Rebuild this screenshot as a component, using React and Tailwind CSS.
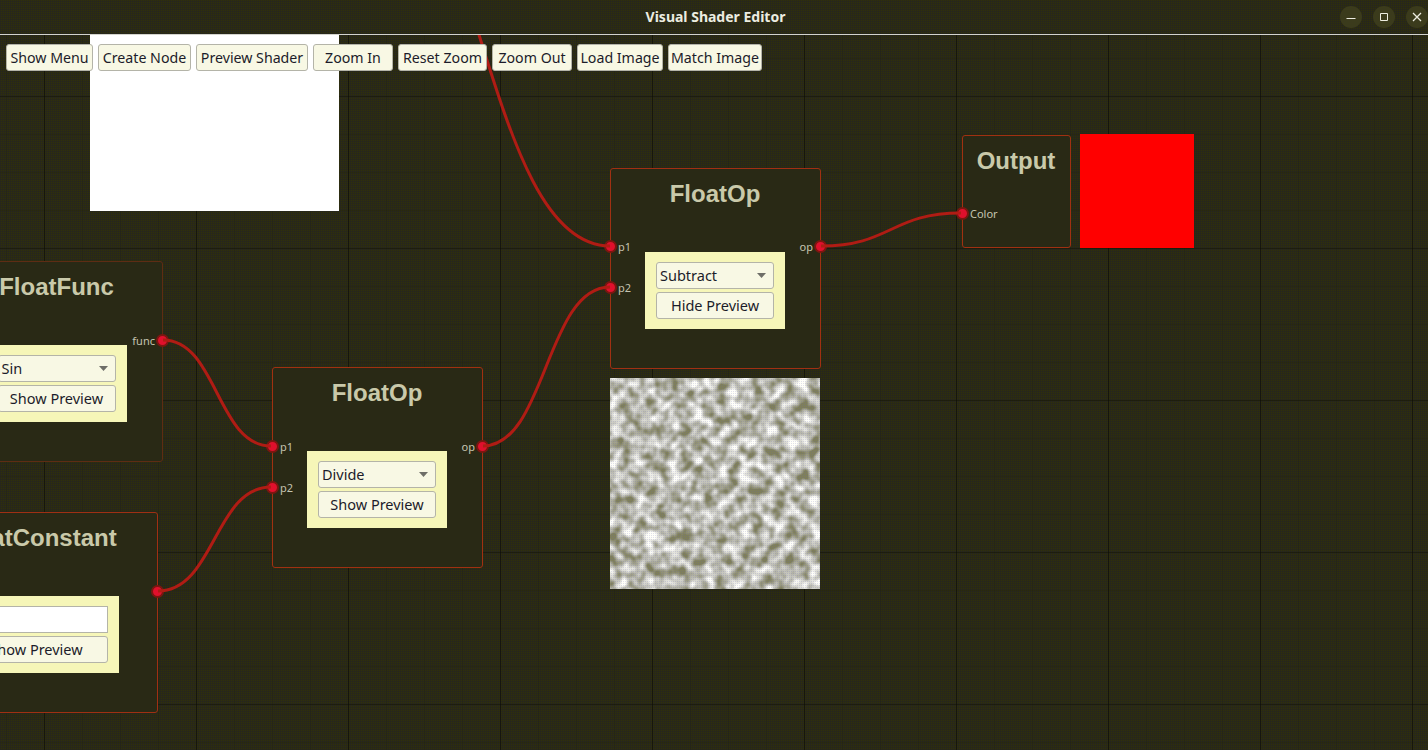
import { useId } from "react";

const dither =
  "bg-[#2f2f0c] bg-[linear-gradient(90deg,#1c1c304d_1px,transparent_1px),linear-gradient(0deg,#1c1c304d_1px,transparent_1px)] bg-[length:2px_2px]";

const canvasBg =
  "bg-[#2f2f0c] bg-[linear-gradient(90deg,#0c0c0899_1px,transparent_1px),linear-gradient(0deg,#0c0c0866_1px,transparent_1px),linear-gradient(90deg,#14161024_1px,transparent_1px),linear-gradient(0deg,#14161024_1px,transparent_1px),linear-gradient(90deg,#1c1c304d_1px,transparent_1px),linear-gradient(0deg,#1c1c304d_1px,transparent_1px)] " +
  "[background-size:152px_152px,152px_152px,38px_38px,38px_38px,2px_2px,2px_2px] " +
  "[background-position:44px_0,0_97px,6px_0,0_21px,0_0,0_0]";

const toolbar = [
  { label: "Show Menu", width: "w-[87px]" },
  { label: "Create Node", width: "w-[93px]" },
  { label: "Preview Shader", width: "w-[112px]" },
  { label: "Zoom In", width: "w-[80px]" },
  { label: "Reset Zoom", width: "w-[89px]" },
  { label: "Zoom Out", width: "w-[80px]" },
  { label: "Load Image", width: "w-[86px]" },
  { label: "Match Image", width: "w-[94px]" },
];

const wires = [
  "M350 -170C480 -170 480 246 610 246",
  "M163 340C217 340 217 446 271 446",
  "M158 591C214.500 591 214.500 487 271 487",
  "M483 446C546 446 546 287 610 287",
  "M821 246C891 246 891 213 961 213",
];

function Port({ label, side, className }) {
  return (
    <div
      className={`absolute flex h-[12px] items-center gap-[1px] text-[11px] leading-none text-[#c4c4b0] ${
        side === "left"
          ? "left-[-7px] flex-row"
          : "right-[-7px] flex-row-reverse"
      } ${className}`}
    >
      <span className="h-[13px] w-[13px] shrink-0 rounded-full border-2 border-[#7c1610] bg-[#e0102c]" />
      <span>{label}</span>
    </div>
  );
}

function ControlButton({ children }) {
  return (
    <button className="flex h-[27px] w-full shrink-0 items-center justify-center rounded-[3px] border border-[#b4b4a8] bg-[#f8f8e4] text-[14.5px] leading-none text-[#1c1c2a]">
      {children}
    </button>
  );
}

function Select({ value }) {
  return (
    <div className="flex h-[27px] w-full shrink-0 items-center justify-between rounded-[3px] border border-[#b4b4a8] bg-[#f8f8e4] pl-[3px] pr-[7px] text-[14.5px] leading-none text-[#1c1c2a]">
      <span>{value}</span>
      <svg width="9" height="5" viewBox="0 0 9 5">
        <path d="M0 0h9L4.500 5z" fill="#6e6e68" />
      </svg>
    </div>
  );
}

function Node({ title, className, borderClass = "border-[#a03012]", panelClass, ports, children }) {
  return (
    <div
      className={`absolute flex flex-col items-center rounded-[3px] border bg-[#292915] pr-[1px] pt-[11px] ${borderClass} ${className}`}
    >
      <h2 className="whitespace-nowrap font-['Liberation_Sans',sans-serif] text-[24px] font-bold leading-[28px] text-[#c9c9aa]">
        {title}
      </h2>
      {children && (
        <div className={`mt-[44px] flex flex-col gap-[3px] bg-[#f6f6b8] px-[11px] py-[10px] ${panelClass}`}>
          {children}
        </div>
      )}
      {ports}
    </div>
  );
}

function NoisePreview() {
  const id = useId().replace(/:/g, "");
  return (
    <div className="absolute left-[610px] top-[378px] h-[211px] w-[210px]">
      <svg width="210" height="211" className="block">
        <defs>
          <filter id={id} x="0" y="0" width="100%" height="100%" colorInterpolationFilters="sRGB">
            <feTurbulence type="fractalNoise" baseFrequency="0.085" numOctaves="2" seed="7" />
            <feColorMatrix values="2.200 0 0 0 -0.600 2.200 0 0 0 -0.600 2.200 0 0 0 -0.600 0 0 0 0 1" />
            <feComponentTransfer>
              <feFuncR type="table" tableValues="0.5 0.74 1" />
              <feFuncG type="table" tableValues="0.5 0.74 1" />
              <feFuncB type="table" tableValues="0.36 0.7 0.98" />
            </feComponentTransfer>
          </filter>
          <pattern id={`${id}dots`} width="2" height="2" patternUnits="userSpaceOnUse">
            <rect x="1" y="1" width="1" height="1" fill="#6060b030" />
          </pattern>
        </defs>
        <rect width="210" height="211" filter={`url(#${id})`} />
        <rect width="210" height="211" fill={`url(#${id}dots)`} />
      </svg>
    </div>
  );
}

function WindowButton({ children }) {
  return (
    <span className="flex h-[22px] w-[22px] items-center justify-center rounded-full bg-[#3b3b1c]">
      <svg width="12" height="12" viewBox="0 0 12 12" fill="none" stroke="#ecece0" strokeWidth="1">
        {children}
      </svg>
    </span>
  );
}

export default function App() {
  return (
    <div
      className={`relative h-[750px] w-[1428px] overflow-hidden font-['Noto_Sans',sans-serif] ${canvasBg}`}
    >
      <div className="absolute left-[90px] top-[35px] h-[176px] w-[249px] bg-white" />
      <div className="absolute left-[1080px] top-[134px] h-[114px] w-[114px] bg-[#ff0000]" />
      <NoisePreview />

      <Node
        title="FloatFunc"
        className="left-[-49px] top-[261px] h-[201px] w-[212px]"
        borderClass="border-[#5e2c14]"
        panelClass="w-[140px]"
        ports={<Port label="func" side="right" className="top-[72px]" />}
      >
        <Select value="Sin" />
        <ControlButton>Show Preview</ControlButton>
      </Node>

      <Node
        title="FloatConstant"
        className="left-[-85px] top-[512px] h-[201px] w-[243px]"
        panelClass="w-[165px]"
        ports={<Port label="" side="right" className="top-[72px]" />}
      >
        <div className="h-[27px] w-full shrink-0 border border-[#b4b4a8] bg-white" />
        <ControlButton>Show Preview</ControlButton>
      </Node>

      <Node
        title="FloatOp"
        className="left-[272px] top-[367px] h-[201px] w-[211px]"
        panelClass="w-[140px]"
        ports={
          <>
            <Port label="p1" side="left" className="top-[72px]" />
            <Port label="p2" side="left" className="top-[113px]" />
            <Port label="op" side="right" className="top-[72px]" />
          </>
        }
      >
        <Select value="Divide" />
        <ControlButton>Show Preview</ControlButton>
      </Node>

      <Node
        title="FloatOp"
        className="left-[610px] top-[168px] h-[201px] w-[211px]"
        panelClass="w-[140px]"
        ports={
          <>
            <Port label="p1" side="left" className="top-[71px]" />
            <Port label="p2" side="left" className="top-[112px]" />
            <Port label="op" side="right" className="top-[71px]" />
          </>
        }
      >
        <Select value="Subtract" />
        <ControlButton>Hide Preview</ControlButton>
      </Node>

      <Node
        title="Output"
        className="left-[962px] top-[135px] h-[113px] w-[109px]"
        ports={<Port label="Color" side="left" className="top-[71px]" />}
      />

      <svg className="pointer-events-none absolute inset-0" width="1428" height="750" fill="none">
        {wires.map((d) => (
          <path key={d} d={d} stroke="#b01c14" strokeWidth="3" />
        ))}
      </svg>

      <header className={`relative flex h-[35px] items-center justify-center border-b border-[#d4d4cc] pl-[3px] ${dither}`}>
        <span className="text-[14px] font-bold leading-none text-[#ecece0]">Visual Shader Editor</span>
        <div className="absolute right-0 top-0 flex h-[34px] items-center gap-[11px]">
          <WindowButton>
            <path d="M1.500 7.500h9" />
          </WindowButton>
          <WindowButton>
            <path d="M2.500 2.500h7v7h-7z" />
          </WindowButton>
          <WindowButton>
            <path d="M2 2l8 8M10 2l-8 8" strokeWidth="1.300" />
          </WindowButton>
        </div>
      </header>

      <nav className="relative flex gap-[5px] pl-[6px] pt-[9px]">
        {toolbar.map((item) => (
          <button
            key={item.label}
            className={`flex h-[27px] items-center justify-center whitespace-nowrap rounded-[3px] border border-[#b4b4a8] bg-[#f8f8e4] pt-[1px] text-[14.2px] leading-none text-[#1c1c2a] ${item.width}`}
          >
            {item.label}
          </button>
        ))}
      </nav>
    </div>
  );
}
